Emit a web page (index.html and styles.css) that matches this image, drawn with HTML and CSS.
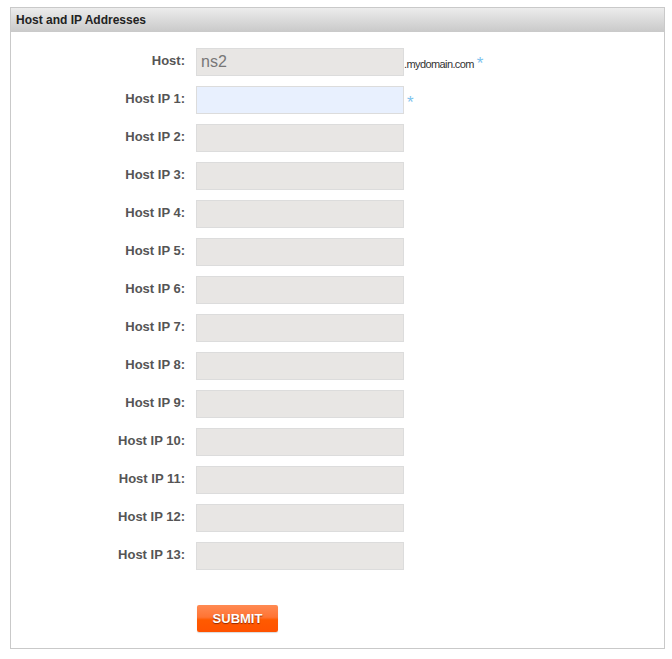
FILE: index.html
```html
<!DOCTYPE html>
<html>
<head>
<meta charset="utf-8">
<link rel="stylesheet" href="styles.css">
</head>
<body>
<div class="panel">
  <div class="panel-head">Host and IP Addresses</div>
  <form class="form">
    <div class="row">
      <label class="lbl">Host:</label>
      <input class="field" type="text" value="ns2">
      <span class="suffix">.mydomain.com</span><span class="req req-host">*</span>
    </div>
    <div class="row">
      <label class="lbl">Host IP 1:</label>
      <input class="field field-active" type="text">
      <span class="req">*</span>
    </div>
    <div class="row"><label class="lbl">Host IP 2:</label><input class="field" type="text"></div>
    <div class="row"><label class="lbl">Host IP 3:</label><input class="field" type="text"></div>
    <div class="row"><label class="lbl">Host IP 4:</label><input class="field" type="text"></div>
    <div class="row"><label class="lbl">Host IP 5:</label><input class="field" type="text"></div>
    <div class="row"><label class="lbl">Host IP 6:</label><input class="field" type="text"></div>
    <div class="row"><label class="lbl">Host IP 7:</label><input class="field" type="text"></div>
    <div class="row"><label class="lbl">Host IP 8:</label><input class="field" type="text"></div>
    <div class="row"><label class="lbl">Host IP 9:</label><input class="field" type="text"></div>
    <div class="row"><label class="lbl">Host IP 10:</label><input class="field" type="text"></div>
    <div class="row"><label class="lbl">Host IP 11:</label><input class="field" type="text"></div>
    <div class="row"><label class="lbl">Host IP 12:</label><input class="field" type="text"></div>
    <div class="row"><label class="lbl">Host IP 13:</label><input class="field" type="text"></div>
    <div class="actions">
      <button class="submit" type="button">SUBMIT</button>
    </div>
  </form>
</div>
</body>
</html>
```
FILE: styles.css
```css
html, body {
  margin: 0;
  padding: 0;
  background: #fff;
}
body {
  padding: 7px 7px 0 10px;
  font-family: "Liberation Sans", Arial, sans-serif;
}
.panel {
  width: 653px;
  height: 640px;
  border: 1px solid #c9c9c9;
  box-sizing: content-box;
}
.panel-head {
  height: 24px;
  line-height: 24px;
  padding-left: 5px;
  font-size: 12px;
  font-weight: bold;
  color: #222;
  background: linear-gradient(#ececec, #c9c9c9);
}
.form {
  display: flex;
  flex-direction: column;
  gap: 10px;
  padding-top: 16px;
}
.row {
  display: flex;
  align-items: center;
  height: 28px;
}
.lbl {
  width: 174px;
  text-align: right;
  font-size: 13px;
  font-weight: bold;
  color: #555;
  margin-right: 11px;
  position: relative;
  top: -2px;
}
.field {
  width: 208px;
  height: 28px;
  box-sizing: border-box;
  border: 1px solid #dcdcdc;
  background: #e8e6e4;
  margin: 0;
  padding: 0 4px;
  font-family: "Liberation Sans", Arial, sans-serif;
  font-size: 16px;
  color: #777;
  outline: none;
}
.field-active {
  background: #e8f0fe;
}
.suffix {
  font-size: 11px;
  color: #333;
  align-self: flex-end;
  margin-bottom: 6px;
  letter-spacing: -0.6px;
}
.req {
  color: #7ec3ee;
  font-size: 17px;
  margin-left: 3px;
  position: relative;
  top: 3px;
}
.req-host {
  margin-left: 3px;
  top: 2px;
}
.actions {
  padding-left: 186px;
  margin-top: 25px;
}
.submit {
  width: 81px;
  height: 27px;
  border: none;
  border-radius: 2px;
  background: linear-gradient(#ff8a52 0%, #ff7434 45%, #ff5a00 55%, #ff5200 100%);
  box-shadow: 0 1px 1px rgba(0,0,0,0.15);
  color: #fff;
  font-family: "Liberation Sans", Arial, sans-serif;
  font-size: 13px;
  font-weight: bold;
  text-shadow: 0 1px 1px rgba(120,30,0,0.8);
  padding: 0;
  cursor: pointer;
}
```
